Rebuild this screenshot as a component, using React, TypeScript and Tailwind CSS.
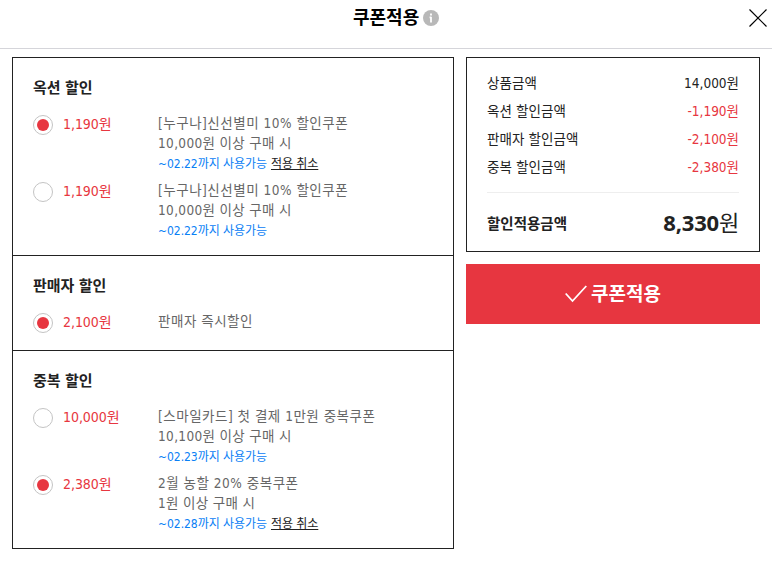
import React, { useState } from "react";

type Coupon = {
  id: string;
  price: string;
  name: string;
  condition?: string;
  until?: string;
};

type Section = {
  title: string;
  coupons: Coupon[];
};

const sections: Section[] = [
  {
    title: "옥션 할인",
    coupons: [
      {
        id: "auction-1",
        price: "1,190",
        name: "[누구나]신선별미 10% 할인쿠폰",
        condition: "10,000원 이상 구매 시",
        until: "~02.22까지 사용가능",
      },
      {
        id: "auction-2",
        price: "1,190",
        name: "[누구나]신선별미 10% 할인쿠폰",
        condition: "10,000원 이상 구매 시",
        until: "~02.22까지 사용가능",
      },
    ],
  },
  {
    title: "판매자 할인",
    coupons: [{ id: "seller-1", price: "2,100", name: "판매자 즉시할인" }],
  },
  {
    title: "중복 할인",
    coupons: [
      {
        id: "extra-1",
        price: "10,000",
        name: "[스마일카드] 첫 결제 1만원 중복쿠폰",
        condition: "10,100원 이상 구매 시",
        until: "~02.23까지 사용가능",
      },
      {
        id: "extra-2",
        price: "2,380",
        name: "2월 농할 20% 중복쿠폰",
        condition: "1원 이상 구매 시",
        until: "~02.28까지 사용가능",
      },
    ],
  },
];

const summary = [
  { label: "상품금액", value: "14,000원", color: "text-[#222]" },
  { label: "옥션 할인금액", value: "-1,190원", color: "text-[#e73640]" },
  { label: "판매자 할인금액", value: "-2,100원", color: "text-[#e73640]" },
  { label: "중복 할인금액", value: "-2,380원", color: "text-[#e73640]" },
];

export default function App() {
  const [selected, setSelected] = useState(["auction-1", "seller-1", "extra-2"]);

  const select = (section: Section, id: string) => {
    const ids = section.coupons.map((c) => c.id);
    setSelected([...selected.filter((s) => !ids.includes(s)), id]);
  };

  const cancel = (id: string) => {
    setSelected(selected.filter((s) => s !== id));
  };

  return (
    <div className="h-[572px] w-[772px] overflow-hidden bg-white font-['DejaVu_Sans_Condensed','Noto_Sans_CJK_KR',sans-serif] text-[13.5px] text-[#222]">
      <header className="flex h-[49px] border-b border-[#d5d5da] pt-[8px]">
        <div className="w-[353px]" />
        <h1 className="text-[18px] leading-5 font-bold text-black">쿠폰적용</h1>
        <svg className="mt-[2px] ml-[4px] h-4 w-4" viewBox="0 0 16 16">
          <circle cx="8" cy="8" r="8" fill="#b8b8b8" />
          <path d="M8 3.5v2M8 6.8v5.7M6.6 7.3H8" stroke="#fff" strokeWidth="1.8" />
        </svg>
        <button className="mt-[1px] mr-[5px] ml-auto h-[18px] w-[18px]">
          <svg viewBox="0 0 18 18" className="h-[18px] w-[18px]">
            <path d="M0.5 0.5l17 17M17.5 0.5l-17 17" stroke="#000" strokeWidth="1.2" />
          </svg>
        </button>
      </header>

      <main className="flex items-start gap-[12px] px-[12px] pt-[8px]">
        <div className="w-[442px] border-x border-b border-[#222]">
          {sections.map((section) => (
            <section
              key={section.title}
              className="border-t border-[#222] px-[20px] pt-[20px] pb-[15px]"
            >
              <h2 className="mb-[15px] text-[15px] leading-5 font-bold tracking-[-0.1px]">
                {section.title}
              </h2>
              <ul className="flex flex-col gap-[7px]">
                {section.coupons.map((coupon) => {
                  const checked = selected.includes(coupon.id);
                  return (
                    <li key={coupon.id} className="flex min-h-[24px] leading-5">
                      <button
                        className="mt-[2px] flex h-[20px] w-[20px] items-center justify-center rounded-full border border-[#c4c4c4]"
                        onClick={() => select(section, coupon.id)}
                      >
                        {checked && (
                          <span className="h-[12px] w-[12px] rounded-full bg-[#e73640]" />
                        )}
                      </button>
                      <p className="ml-[10px] w-[95px] pt-px text-[14px] tracking-[-0.05px] text-[#e73640]">
                        {coupon.price}원
                      </p>
                      <div className="text-[#666]">
                        <p className="tracking-[0.52px]">{coupon.name}</p>
                        {coupon.condition && (
                          <p className="tracking-[0.35px]">{coupon.condition}</p>
                        )}
                        {coupon.until && (
                          <p className="flex h-5 gap-[4px] pt-px text-[12px] tracking-[-0.05px]">
                            <span className="text-[#0a80f5]">{coupon.until}</span>
                            {checked && (
                              <button
                                className="text-[#222] underline"
                                onClick={() => cancel(coupon.id)}
                              >
                                적용 취소
                              </button>
                            )}
                          </p>
                        )}
                      </div>
                    </li>
                  );
                })}
              </ul>
            </section>
          ))}
        </div>

        <div className="w-[294px]">
          <div className="h-[195px] border border-[#222] px-[20px] pt-[11px]">
            {summary.map((row) => (
              <div key={row.label} className="flex h-[28px] items-center justify-between">
                <span className="tracking-[0.1px]">{row.label}</span>
                <span className={row.color}>{row.value}</span>
              </div>
            ))}
            <div className="mt-[11px] flex h-[61px] items-center justify-between border-t border-[#eee]">
              <span className="pt-[3px] text-[14.5px] font-bold">할인적용금액</span>
              <span className="text-[22px] tracking-[-0.2px]">
                <b className="font-['Noto_Sans']">8,330</b>원
              </span>
            </div>
          </div>
          <button className="mt-[12px] flex h-[60px] w-full items-center bg-[#e73640] pl-[99px] text-[19px] font-bold text-white">
            <svg className="mr-[4px] h-[18px] w-[22px]" viewBox="0 0 22 18">
              <path d="M0.7 8.5l6.8 7.5L21.3 1" fill="none" stroke="#fff" strokeWidth="1.8" />
            </svg>
            <span className="pt-px">쿠폰적용</span>
          </button>
        </div>
      </main>
    </div>
  );
}
